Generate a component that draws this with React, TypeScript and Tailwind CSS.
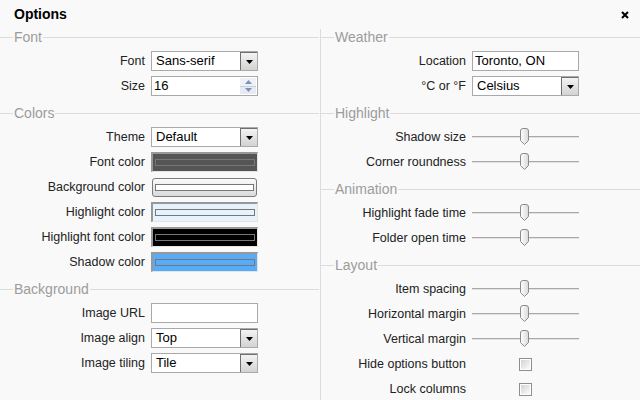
import React from 'react';

const font = { fontFamily: '"Liberation Sans", Arial, sans-serif' };

function Heading({ title }: { title: string }) {
  return (
    <div className="flex h-4 items-center">
      <div className="h-px w-[13px] bg-[#dcdcdc]" />
      <span className="px-[1px] text-[14px] leading-4 text-[#9c9c9c]">{title}</span>
      <div className="h-px flex-1 bg-[#dcdcdc]" />
    </div>
  );
}

function Row({ label, children }: { label: string; children: React.ReactNode }) {
  return (
    <div className="flex h-5 items-center">
      <div className="w-[145px] text-right text-[12.5px] leading-none text-[#222]">{label}</div>
      <div className="ml-[6px] flex h-5 w-[107px] items-center">{children}</div>
    </div>
  );
}

function Select({ value }: { value: string }) {
  return (
    <div className="flex h-5 w-full border border-[#a9a9a9] bg-white">
      <div className="flex-1 pl-[4px] text-[13px] leading-[18px] text-black">{value}</div>
      <div className="flex h-full w-[17px] items-center justify-center border-l border-t border-[#6f6f6f] bg-gradient-to-b from-[#f3f3f3] to-[#d3d3d3]">
        <svg width="7" height="4" viewBox="0 0 7 4">
          <path d="M0 0H7L3.5 4Z" fill="#000" />
        </svg>
      </div>
    </div>
  );
}

function TextInput({ value }: { value: string }) {
  return (
    <div className="h-5 w-full border border-[#a9a9a9] bg-white pl-[2px] text-[13px] leading-[18px] text-black">
      {value}
    </div>
  );
}

function Spinner({ value }: { value: string }) {
  return (
    <div className="flex h-5 w-full border border-[#a9a9a9] bg-white">
      <div className="flex-1 pl-[2px] text-[13px] leading-[18px] text-black">{value}</div>
      <div className="my-[1px] mr-[1px] flex w-[16px] flex-col">
        <div className="flex flex-1 items-center justify-center border-b border-[#c8cfdc] bg-[#eef1f6]">
          <svg width="7" height="4" viewBox="0 0 7 4">
            <path d="M3.5 0L7 4H0Z" fill="#7a92bf" />
          </svg>
        </div>
        <div className="flex flex-1 items-center justify-center bg-[#e6eaf1]">
          <svg width="7" height="4" viewBox="0 0 7 4">
            <path d="M0 0H7L3.5 4Z" fill="#7a92bf" />
          </svg>
        </div>
      </div>
    </div>
  );
}

function Swatch({ bg }: { bg: string }) {
  return (
    <div
      className={`flex h-5 w-full items-center border-l-2 border-t-2 border-r border-b border-l-[#989898] border-t-[#989898] border-r-[#e4e4e4] border-b-[#e4e4e4] px-[2px] ${bg}`}
    >
      <div className="h-[7px] w-full border border-[#777]" />
    </div>
  );
}

function ButtonSwatch() {
  return (
    <div className="mx-[1px] flex h-[19px] w-full items-center rounded-[3px] border border-[#7b7b7b] bg-gradient-to-b from-[#fbfbfb] to-[#dadada] px-[2px]">
      <div className="h-[7px] w-full border border-[#777] bg-white" />
    </div>
  );
}

function Slider() {
  return (
    <div className="relative flex h-5 w-full items-center">
      <div className="-mt-[1px] h-[2px] w-full border-t border-b border-t-[#a9a9a9] border-b-[#e2e2e2]" />
      <svg className="absolute left-[47px] top-[1px]" width="11" height="18" viewBox="0 0 11 18">
        <defs>
          <linearGradient id="thumb" x1="0" y1="0" x2="1" y2="0">
            <stop offset="0" stopColor="#ffffff" />
            <stop offset="1" stopColor="#d9d9d9" />
          </linearGradient>
        </defs>
        <path
          d="M1.5 3 Q1.5 0.5 4 0.5 H7 Q9.5 0.5 9.5 3 V12.5 L5.5 16.5 L1.5 12.5 Z"
          fill="url(#thumb)"
          stroke="#8a8a8a"
        />
      </svg>
    </div>
  );
}

function Checkbox() {
  return (
    <div className="flex w-full justify-center">
      <div className="h-[13px] w-[13px] border border-[#8e8e8e] bg-white p-[1px]">
        <div className="h-full w-full bg-gradient-to-br from-[#d4d4d4] to-[#fbfbfb]" />
      </div>
    </div>
  );
}

function Section({ title, children }: { title: string; children: React.ReactNode }) {
  return (
    <div className="mb-[9px]">
      <Heading title={title} />
      <div className="flex flex-col gap-[5px] pt-[6px]">{children}</div>
    </div>
  );
}

export default function App() {
  return (
    <div className="flex h-[400px] w-[640px] flex-col overflow-hidden bg-[#f9f9f9]" style={font}>
      <div className="flex h-[29px] shrink-0 items-center justify-between pl-[14px] pr-[11px]">
        <span className="text-[14px] font-bold text-black">Options</span>
        <svg width="8" height="8" viewBox="0 0 8 8">
          <path d="M1 1L7 7M7 1L1 7" stroke="#000" strokeWidth="2" />
        </svg>
      </div>

      <div className="flex min-h-0 flex-1">
        <div className="w-[320px] shrink-0 pr-[1px]">
          <Section title="Font">
            <Row label="Font">
              <Select value="Sans-serif" />
            </Row>
            <Row label="Size">
              <Spinner value="16" />
            </Row>
          </Section>
          <Section title="Colors">
            <Row label="Theme">
              <Select value="Default" />
            </Row>
            <Row label="Font color">
              <Swatch bg="bg-[#555555]" />
            </Row>
            <Row label="Background color">
              <ButtonSwatch />
            </Row>
            <Row label="Highlight color">
              <Swatch bg="bg-[#e6f3fd]" />
            </Row>
            <Row label="Highlight font color">
              <Swatch bg="bg-black" />
            </Row>
            <Row label="Shadow color">
              <Swatch bg="bg-[#58abf6]" />
            </Row>
          </Section>
          <Section title="Background">
            <Row label="Image URL">
              <TextInput value="" />
            </Row>
            <Row label="Image align">
              <Select value="Top" />
            </Row>
            <Row label="Image tiling">
              <Select value="Tile" />
            </Row>
          </Section>
        </div>

        <div className="w-px shrink-0 bg-[#dcdcdc]" />

        <div className="flex-1">
          <Section title="Weather">
            <Row label="Location">
              <TextInput value="Toronto, ON" />
            </Row>
            <Row label="°C or °F">
              <Select value="Celsius" />
            </Row>
          </Section>
          <Section title="Highlight">
            <Row label="Shadow size">
              <Slider />
            </Row>
            <Row label="Corner roundness">
              <Slider />
            </Row>
          </Section>
          <Section title="Animation">
            <Row label="Highlight fade time">
              <Slider />
            </Row>
            <Row label="Folder open time">
              <Slider />
            </Row>
          </Section>
          <Section title="Layout">
            <Row label="Item spacing">
              <Slider />
            </Row>
            <Row label="Horizontal margin">
              <Slider />
            </Row>
            <Row label="Vertical margin">
              <Slider />
            </Row>
            <Row label="Hide options button">
              <Checkbox />
            </Row>
            <Row label="Lock columns">
              <Checkbox />
            </Row>
          </Section>
        </div>
      </div>
    </div>
  );
}
